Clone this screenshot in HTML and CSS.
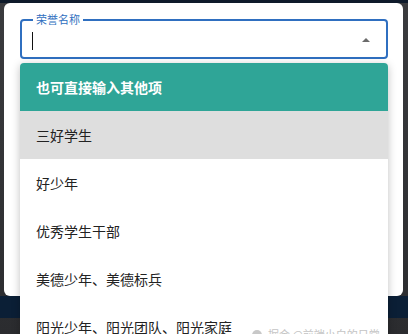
FILE: index.html
```html
<!DOCTYPE html>
<html lang="zh-CN">
  <head>
    <meta charset="UTF-8" />
    <title>荣誉名称</title>
    <link rel="stylesheet" href="styles.css">
  </head>
  <body>
    <div class="backdrop">
      <div class="dialog">
        <div class="field">
          <span class="field-label">荣誉名称</span>
          <span class="caret"></span>
          <span class="arrow"></span>
        </div>
      </div>
      <div class="band"></div>

      <ul class="menu">
        <li class="menu-head">也可直接输入其他项</li>
        <li class="menu-item active">三好学生</li>
        <li class="menu-item">好少年</li>
        <li class="menu-item">优秀学生干部</li>
        <li class="menu-item">美德少年、美德标兵</li>
        <li class="menu-item">阳光少年、阳光团队、阳光家庭</li>
      </ul>

      <div class="watermark"><span class="dot"></span>掘金 @前端小白的日常</div>
    </div>
  </body>
</html>
```

FILE: styles.css
```css
html, body {
  margin: 0;
  padding: 0;
}

body {
  font-family: "Noto Sans CJK SC", "Noto Sans", sans-serif;
  width: 408px;
  height: 334px;
  overflow: hidden;
  background-color: #343436;
}

.backdrop {
  position: relative;
  height: 334px;
  padding-top: 3px;
  box-sizing: border-box;
  background: linear-gradient(#0e1a2a 0, #0e1a2a 3px, #3a3b3e 3px, #2b2c2f 100%);
}

.dialog {
  margin: 0 5px 0 4px;
  height: 293px;
  background-color: #fff;
  border-radius: 6px;
  padding: 16px 15px 0 16px;
  box-sizing: border-box;
}

.band {
  height: 22px;
  background-color: #0b1f36;
}

.field {
  position: relative;
  height: 40px;
  border: 2px solid #2f6fc0;
  border-radius: 4px;
  box-sizing: border-box;
}

.field-label {
  position: absolute;
  top: -9px;
  left: 11px;
  padding: 0 3px;
  background-color: #fff;
  font-size: 11px;
  line-height: 14px;
  color: #2f6fc0;
}

.caret {
  position: absolute;
  left: 10px;
  top: 11px;
  width: 1px;
  height: 18px;
  background-color: #111;
}

.arrow {
  position: absolute;
  right: 16px;
  top: 17px;
  width: 0;
  height: 0;
  border-left: 4px solid transparent;
  border-right: 4px solid transparent;
  border-bottom: 4px solid #6b6b6b;
}

.menu {
  position: absolute;
  left: 20px;
  top: 63px;
  width: 368px;
  margin: 0;
  padding: 0;
  list-style: none;
  background-color: #fff;
  border-radius: 4px 4px 0 0;
  box-shadow: 0 2px 8px rgba(0, 0, 0, 0.25);
  overflow: hidden;
}

.menu-head,
.menu-item {
  height: 48px;
  line-height: 48px;
  padding-left: 16px;
  font-size: 14px;
}

.menu-head {
  background-color: #2fa597;
  color: #fff;
  font-weight: bold;
}

.menu-item {
  color: #222;
}

.menu-item.active {
  background-color: #dedede;
}

.watermark {
  position: absolute;
  left: 252px;
  top: 327px;
  font-size: 11px;
  line-height: 14px;
  color: #c4c4c4;
  white-space: nowrap;
}

.dot {
  display: inline-block;
  width: 10px;
  height: 10px;
  border-radius: 50%;
  background-color: #c8c8c8;
  margin-right: 6px;
  vertical-align: -1px;
}
```
